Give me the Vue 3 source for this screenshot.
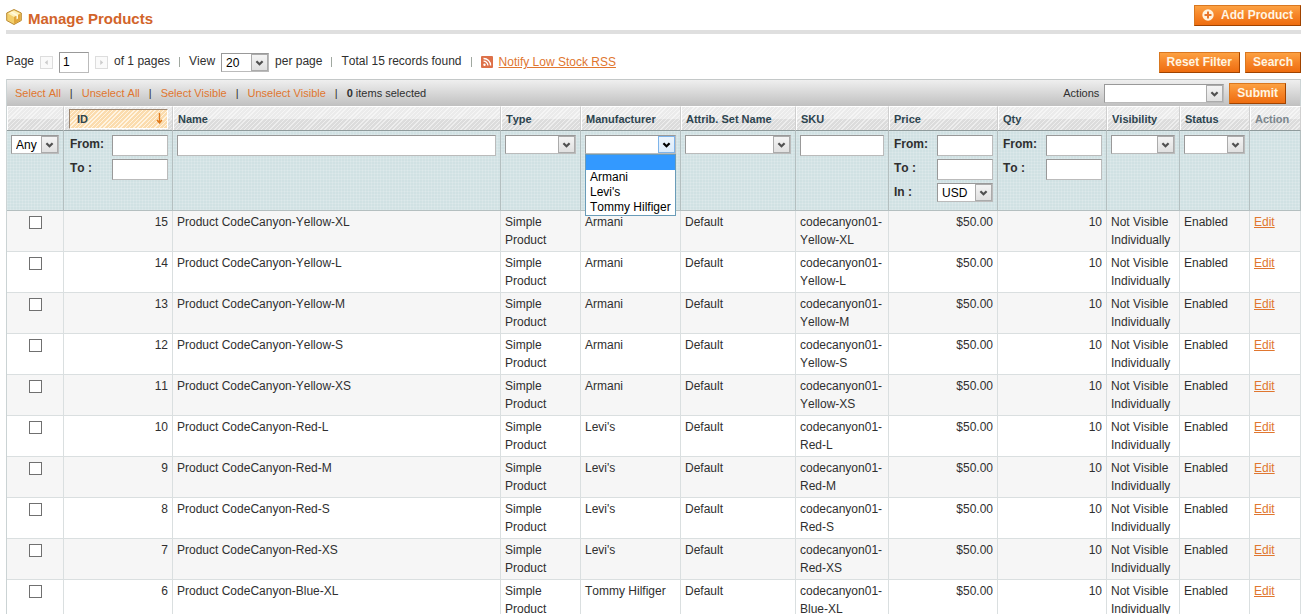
<script setup>
import { ref } from 'vue'

const page = ref('1')
const menuOpen = ref(true)
const manufacturers = ['', 'Armani', "Levi's", 'Tommy Hilfiger']
const manufacturer = ref('')

function choose(name) {
  manufacturer.value = name
  menuOpen.value = false
}

const variants = [
  ['Yellow-XL', 'Armani'],
  ['Yellow-L', 'Armani'],
  ['Yellow-M', 'Armani'],
  ['Yellow-S', 'Armani'],
  ['Yellow-XS', 'Armani'],
  ['Red-L', "Levi's"],
  ['Red-M', "Levi's"],
  ['Red-S', "Levi's"],
  ['Red-XS', "Levi's"],
  ['Blue-XL', 'Tommy Hilfiger'],
]
const products = variants.map(([variant, maker], i) => ({ id: 15 - i, variant, maker }))
</script>

<template>
  <main class="page">
    <header class="title-bar">
      <svg class="cube" viewBox="0 0 16 16" aria-hidden="true">
        <path d="M8 .5 15.300 4v7.500L8 15.500.7 11.500V4z" fill="#f3cf6b" stroke="#b98a35" />
        <path d="M8 1.500 14 4.500 8 8 2 4.500z" fill="#fdf0b8" />
        <path d="M8 8v7l6.500-3.700V4.700z" fill="#e0a63c" />
        <path d="M4 3.500 10.500 7v3.500L12 9.500V6L6 2.500z" fill="#fff9dc" />
      </svg>
      <h1>Manage Products</h1>
      <button class="btn add" type="button">
        <svg viewBox="0 0 12 12" aria-hidden="true">
          <circle cx="6" cy="6" r="5.700" fill="#fff3dd" />
          <path d="M6 2.500v7M2.500 6h7" stroke="#e8762a" stroke-width="2" />
        </svg>
        <span>Add Product</span>
      </button>
    </header>

    <section class="pager">
      <label for="page-number">Page</label>
      <button class="arrow" type="button" aria-label="Previous page">
        <svg viewBox="0 0 13 13"><path d="M8 3.500v6L4.500 6.500z" fill="#ccc" /></svg>
      </button>
      <input id="page-number" v-model="page" class="page-number" type="text" />
      <button class="arrow" type="button" aria-label="Next page">
        <svg viewBox="0 0 13 13"><path d="M5 3.500v6l3.500-3z" fill="#ccc" /></svg>
      </button>
      <span>of 1 pages</span>
      <i class="sep"></i>
      <label for="per-page">View</label>
      <span class="pick per-page">
        <select id="per-page"><option>20</option></select>
        <svg class="chev" viewBox="0 0 17 17" aria-hidden="true"><path d="M5 7l3.500 3.500L12 7" /></svg>
      </span>
      <span>per page</span>
      <i class="sep"></i>
      <span>Total 15 records found</span>
      <i class="sep"></i>
      <a class="rss" href="#">
        <svg viewBox="0 0 12 12" aria-hidden="true">
          <rect width="12" height="12" rx="1" fill="#dd7048" />
          <circle cx="3.500" cy="8.700" r="1.200" fill="#fff" />
          <path d="M2.500 5.200a4.300 4.300 0 0 1 4.400 4.400M2.500 2.500a7 7 0 0 1 7.100 7.100" fill="none" stroke="#fff" stroke-width="1.300" />
        </svg>
        <span>Notify Low Stock RSS</span>
      </a>
      <div class="pager-buttons">
        <button class="btn" type="button">Reset Filter</button>
        <button class="btn" type="button">Search</button>
      </div>
    </section>

    <section class="grid">
      <div class="mass">
        <a href="#">Select All</a><span>|</span>
        <a href="#">Unselect All</a><span>|</span>
        <a href="#">Select Visible</a><span>|</span>
        <a href="#">Unselect Visible</a><span>|</span>
        <span><b>0</b> items selected</span>
        <div class="mass-actions">
          <label for="mass-action">Actions</label>
          <span class="pick mass-pick">
            <select id="mass-action"><option></option></select>
            <svg class="chev" viewBox="0 0 17 17" aria-hidden="true"><path d="M5 7l3.500 3.500L12 7" /></svg>
          </span>
          <button class="btn" type="button">Submit</button>
        </div>
      </div>

      <table>
        <colgroup>
          <col class="w-check" /><col class="w-range" /><col /><col class="w-type" />
          <col class="w-maker" /><col class="w-set" /><col class="w-sku" /><col class="w-range" />
          <col class="w-range" /><col class="w-vis" /><col class="w-status" /><col class="w-action" />
        </colgroup>
        <thead>
          <tr class="heads">
            <th></th>
            <th class="sorted">
              <div>
                ID
                <svg viewBox="0 0 7 11" aria-hidden="true"><path d="M3.500 0v9.500M1 7l2.500 3L6 7" fill="none" stroke="#e07818" stroke-width="1.400" /></svg>
              </div>
            </th>
            <th>Name</th>
            <th>Type</th>
            <th>Manufacturer</th>
            <th>Attrib. Set Name</th>
            <th>SKU</th>
            <th>Price</th>
            <th>Qty</th>
            <th>Visibility</th>
            <th>Status</th>
            <th class="muted">Action</th>
          </tr>
          <tr class="filters">
            <td>
              <span class="pick">
                <select aria-label="Selection"><option>Any</option></select>
                <svg class="chev" viewBox="0 0 17 17" aria-hidden="true"><path d="M5 7l3.500 3.500L12 7" /></svg>
              </span>
            </td>
            <td>
              <div class="range"><label for="id-from">From:</label><input id="id-from" type="text" /></div>
              <div class="range"><label for="id-to">To :</label><input id="id-to" type="text" /></div>
            </td>
            <td><input type="text" aria-label="Name" /></td>
            <td>
              <span class="pick">
                <select aria-label="Type"><option></option></select>
                <svg class="chev" viewBox="0 0 17 17" aria-hidden="true"><path d="M5 7l3.500 3.500L12 7" /></svg>
              </span>
            </td>
            <td>
              <span class="pick open">
                <select v-model="manufacturer" aria-label="Manufacturer">
                  <option v-for="name in manufacturers" :key="name">{{ name }}</option>
                </select>
                <svg class="chev" viewBox="0 0 17 17" aria-hidden="true"><path d="M5 7l3.500 3.500L12 7" /></svg>
                <ul v-if="menuOpen" class="menu" role="listbox" aria-label="Manufacturer options">
                  <li
                    v-for="name in manufacturers"
                    :key="name"
                    role="option"
                    :aria-selected="name === manufacturer"
                    :class="{ current: name === manufacturer }"
                    @click="choose(name)"
                  >{{ name }}</li>
                </ul>
              </span>
            </td>
            <td>
              <span class="pick">
                <select aria-label="Attribute set"><option></option></select>
                <svg class="chev" viewBox="0 0 17 17" aria-hidden="true"><path d="M5 7l3.500 3.500L12 7" /></svg>
              </span>
            </td>
            <td><input type="text" aria-label="SKU" /></td>
            <td>
              <div class="range"><label for="price-from">From:</label><input id="price-from" type="text" /></div>
              <div class="range"><label for="price-to">To :</label><input id="price-to" type="text" /></div>
              <div class="range">
                <label for="currency">In :</label>
                <span class="pick">
                  <select id="currency"><option>USD</option></select>
                  <svg class="chev" viewBox="0 0 17 17" aria-hidden="true"><path d="M5 7l3.500 3.500L12 7" /></svg>
                </span>
              </div>
            </td>
            <td>
              <div class="range"><label for="qty-from">From:</label><input id="qty-from" type="text" /></div>
              <div class="range"><label for="qty-to">To :</label><input id="qty-to" type="text" /></div>
            </td>
            <td>
              <span class="pick">
                <select aria-label="Visibility"><option></option></select>
                <svg class="chev" viewBox="0 0 17 17" aria-hidden="true"><path d="M5 7l3.500 3.500L12 7" /></svg>
              </span>
            </td>
            <td>
              <span class="pick">
                <select aria-label="Status"><option></option></select>
                <svg class="chev" viewBox="0 0 17 17" aria-hidden="true"><path d="M5 7l3.500 3.500L12 7" /></svg>
              </span>
            </td>
            <td></td>
          </tr>
        </thead>
        <tbody>
          <tr v-for="p in products" :key="p.id">
            <td class="check"><input type="checkbox" :aria-label="'Select product ' + p.id" /></td>
            <td class="num">{{ p.id }}</td>
            <td>Product CodeCanyon-{{ p.variant }}</td>
            <td>Simple<br />Product</td>
            <td>{{ p.maker }}</td>
            <td>Default</td>
            <td>codecanyon01-<br />{{ p.variant }}</td>
            <td class="num">$50.00</td>
            <td class="num">10</td>
            <td>Not Visible<br />Individually</td>
            <td>Enabled</td>
            <td><a href="#">Edit</a></td>
          </tr>
        </tbody>
      </table>
    </section>
  </main>
</template>

<style>
body {
  margin: 0;
  background: #fff;
}
</style>

<style scoped>
.page {
  box-sizing: border-box;
  height: 100vh;
  overflow: hidden;
  padding: 0 6px;
  font: 12px/18px "Liberation Sans", Arial, sans-serif;
  font-kerning: none;
  color: #2f2f2f;
}
.page * {
  box-sizing: border-box;
}
input,
select,
button {
  font: inherit;
  margin: 0;
}
a {
  color: #e0762f;
}

/* Title */
.title-bar {
  display: flex;
  align-items: center;
  height: 34px;
  padding-top: 4px;
  border-bottom: 4px solid #dfdfdf;
}
.cube {
  width: 16px;
  height: 16px;
  margin-right: 6px;
}
h1 {
  margin: 4px auto 0 0;
  font-size: 15px;
  line-height: 18px;
  color: #d2642a;
}
.btn {
  display: flex;
  align-items: center;
  justify-content: center;
  height: 21px;
  padding: 0 7px 1px;
  border: 1px solid #ed6502;
  border-color: #d9771f #a04300 #a04300 #d9771f;
  background: linear-gradient(#fca142, #f68427 50%, #ee6d10);
  color: #fff5e2;
  font-weight: bold;
  white-space: nowrap;
}
.add {
  gap: 7px;
  margin-bottom: 4px;
}
.add svg {
  width: 12px;
  height: 12px;
}

/* Pager */
.pager {
  display: flex;
  align-items: center;
  gap: 6px;
  height: 45px;
  padding-top: 11px;
  white-space: nowrap;
  padding-bottom: 0;
}
.pager > label,
.pager > span:not(.pick) {
  margin-bottom: 2px;
}
.arrow {
  width: 13px;
  height: 13px;
  padding: 0;
  border: 1px solid #ddd;
  background: #fafafa;
}
.arrow svg {
  display: block;
  width: 11px;
  height: 11px;
}
input[type='text'] {
  display: block;
  width: 100%;
  height: 21px;
  padding: 0 3px;
  border: 1px solid #a5abab;
  border-color: #999 #bbb #bbb #999;
  border-radius: 0;
  background: #fff;
  color: #000;
}
input[type='text'].page-number {
  width: 30px;
}
.sep {
  width: 1px;
  height: 10px;
  margin: 0 3px;
  background: #a0a8a0;
}
.per-page {
  width: 48px;
}
.rss {
  display: flex;
  align-items: center;
  gap: 6px;
}
.rss svg {
  width: 12px;
  height: 12px;
}
.pager-buttons {
  display: flex;
  gap: 5px;
  margin-left: auto;
}

/* Drop-downs */
.pick {
  position: relative;
  display: block;
}
.pick select {
  display: block;
  width: 100%;
  height: 19px;
  padding: 0 18px 0 4px;
  border: 1px solid #aaa;
  border-color: #999 #bbb #bbb #999;
  border-radius: 0;
  background: #fff;
  color: #000;
  appearance: none;
}
.chev {
  position: absolute;
  top: 1px;
  right: 1px;
  width: 17px;
  height: 17px;
  border: 1px solid #ababab;
  background: linear-gradient(#f4f4f4, #e0e0e0);
  fill: none;
  stroke: #505050;
  stroke-width: 2.500;
  pointer-events: none;
}
.open .chev {
  border-color: #7eb4ea;
  background: linear-gradient(#ecf4fc, #dcecfc);
  stroke: #000;
}
.menu {
  position: absolute;
  z-index: 2;
  top: 19px;
  left: 0;
  min-width: 100%;
  margin: 0;
  padding: 0;
  list-style: none;
  border: 1px solid #6a9cb8;
  background: #fff;
  color: #000;
}
.menu li {
  height: 15px;
  padding: 0 1px 0 4px;
  line-height: 15px;
  white-space: nowrap;
}
.menu .current {
  background: #3399ff;
}

/* Mass action bar */
.grid {
  border-left: 1px solid #cbd3d4;
}
.mass {
  display: flex;
  align-items: center;
  gap: 9px;
  height: 27px;
  padding: 0 14px 0 8px;
  border-top: 1px solid #c4c8c8;
  border-right: 1px solid #cbd3d4;
  background: linear-gradient(#efefef, #c0c0c0);
  font-size: 11px;
  white-space: nowrap;
}
.mass a {
  text-decoration: none;
}
.mass-actions {
  display: flex;
  align-items: center;
  gap: 5px;
  margin-left: auto;
}
.mass-pick {
  width: 120px;
}
.mass .btn {
  font-size: 12px;
}

/* Table */
table {
  width: 100%;
  table-layout: fixed;
  border-collapse: separate;
  border-spacing: 0;
}
.w-check { width: 57px; }
.w-range { width: 109px; }
.w-type { width: 80px; }
.w-maker { width: 100px; }
.w-set { width: 115px; }
.w-sku { width: 93px; }
.w-vis { width: 73px; }
.w-status { width: 70px; }
.w-action { width: 51px; }

th {
  height: 25px;
  padding: 0 0 0 5px;
  border-top: 1px solid #fff;
  border-right: 1px solid #cfcfcf;
  border-bottom: 1px solid #8f9b9c;
  background:
    linear-gradient(to right, #fff 1px, transparent 1px),
    repeating-linear-gradient(135deg, rgba(255, 255, 255, 0.5) 0 1px, transparent 1px 3px),
    linear-gradient(#ebebeb 12px, #dcdcdc 12px);
  color: #2d444f;
  font-size: 11px;
  text-align: left;
  white-space: nowrap;
}
.muted {
  color: #7a868c;
}
.sorted {
  padding: 0 4px 0 5px;
}
.sorted div {
  display: flex;
  align-items: center;
  justify-content: space-between;
  height: 20px;
  padding: 0 4px 0 7px;
  border: 1px solid #9d8670;
  border-right-color: #fff;
  border-bottom-color: #fff;
  background: repeating-linear-gradient(135deg, #fff4e2 0 1px, #fbdcae 1px 3px);
}
.sorted svg {
  width: 7px;
  height: 11px;
}
.filters td {
  height: 80px;
  padding: 4px;
  border-right: 1px solid #b4bfc0;
  border-bottom: 1px solid #b4bfc0;
  background:
    repeating-linear-gradient(rgba(255, 255, 255, 0.15) 0 1px, transparent 1px 3px),
    repeating-linear-gradient(to right, rgba(255, 255, 255, 0.15) 0 1px, transparent 1px 3px),
    #d0e1e3;
  vertical-align: top;
}
.range {
  display: flex;
  justify-content: space-between;
  margin-bottom: 3px;
  padding-left: 2px;
  font-weight: bold;
}
td:nth-child(n + 8) .range {
  padding-left: 1px;
}
.range input[type='text'],
.range .pick {
  width: 56px;
  font-weight: normal;
}
tbody td {
  padding: 2px 4px;
  border-right: 1px solid #dadfe0;
  border-bottom: 1px solid #dadfe0;
  vertical-align: top;
  white-space: nowrap;
}
tbody tr:nth-child(odd) td {
  background: #f6f6f6;
}
.num {
  text-align: right;
}
.check input {
  display: block;
  width: 13px;
  height: 13px;
  margin: 3px auto;
  border: 1px solid #707070;
  background: #fff;
  appearance: none;
}
</style>
